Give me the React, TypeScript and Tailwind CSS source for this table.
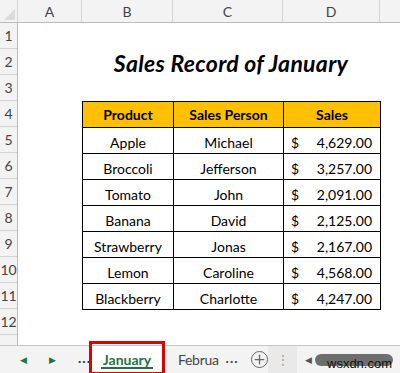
import { Plus } from 'lucide-react';

const rows = [
  ['Apple', 'Michael', '4,629.00'],
  ['Broccoli', 'Jefferson', '3,257.00'],
  ['Tomato', 'John', '2,091.00'],
  ['Banana', 'David', '2,125.00'],
  ['Strawberry', 'Jonas', '2,167.00'],
  ['Lemon', 'Caroline', '4,568.00'],
  ['Blackberry', 'Charlotte', '4,247.00'],
];

const font = { fontFamily: 'Lato, "Open Sans", sans-serif' };

const App = () => {
  return (
    <div className="relative w-[400px] h-[373px] overflow-hidden bg-white text-black" style={font}>
      {/* Column headers */}
      <div className="flex h-[23px] bg-[#f3f3f3] border-b border-[#bcbcbc] text-[14px] text-[#444]">
        <div className="relative w-[18px] border-r border-[#d5d5d5]">
          <div className="absolute right-[2px] bottom-[2px] w-0 h-0 border-l-[11px] border-l-transparent border-b-[11px] border-b-[#dcdcdc]" />
        </div>
        <div className="w-[64px] flex items-center justify-center border-r border-[#d5d5d5]">A</div>
        <div className="w-[91px] flex items-center justify-center border-r border-[#d5d5d5]">B</div>
        <div className="w-[110px] flex items-center justify-center border-r border-[#d5d5d5]">C</div>
        <div className="w-[97px] flex items-center justify-center border-r border-[#d5d5d5]">D</div>
        <div className="flex-1" />
      </div>

      <div className="flex h-[322px]">
        {/* Row numbers */}
        <div className="w-[18px] bg-[#f3f3f3] border-r border-[#bcbcbc] text-[14px] text-[#444]">
          {Array.from({ length: 12 }, (_, i) => (
            <div key={i} className="h-[26px] flex items-center justify-center border-b border-[#d5d5d5]">
              {i + 1}
            </div>
          ))}
        </div>

        {/* Sheet */}
        <div className="flex-1 pl-[64px]">
          <div className="w-[298px] h-[26px]" />
          <div className="w-[298px] h-[26px] flex items-center justify-center pt-[2px]">
            <span className="text-[23px] font-bold italic tracking-[0.3px]">Sales Record of January</span>
          </div>
          <div className="w-[298px] h-[26px]" />
          <table className="table-fixed border-collapse text-[14px]">
            <colgroup>
              <col className="w-[91px]" />
              <col className="w-[110px]" />
              <col className="w-[97px]" />
            </colgroup>
            <thead>
              <tr className="h-[26px] bg-[#ffc000] font-bold">
                <th className="border border-black p-0">Product</th>
                <th className="border border-black p-0">Sales Person</th>
                <th className="border border-black p-0">Sales</th>
              </tr>
            </thead>
            <tbody>
              {rows.map(([product, person, sales]) => (
                <tr key={product} className="h-[26px]">
                  <td className="border border-black p-0 text-center pt-[3px]">{product}</td>
                  <td className="border border-black p-0 text-center pt-[3px]">{person}</td>
                  <td className="border border-black p-0 pt-[3px]">
                    <div className="flex justify-between pl-[7px] pr-[8px]">
                      <span>$</span>
                      <span>{sales}</span>
                    </div>
                  </td>
                </tr>
              ))}
            </tbody>
          </table>
        </div>
      </div>

      {/* Sheet tabs */}
      <div className="flex items-center h-[28px] bg-[#f3f3f3] border-t border-[#c6c6c6] text-[14px]">
        <div className="w-[89px] flex items-center pl-[20px] gap-[22px] text-[#217346]">
          <span className="text-[9px]">◀</span>
          <span className="text-[9px]">▶</span>
          <span className="text-[#333] font-bold tracking-[1px] -mt-[4px]">...</span>
        </div>
        <div className="relative w-[76px] h-full bg-white flex items-center justify-center font-bold text-[#217346]">
          January
          <div className="absolute bottom-[4px] left-[12px] right-[12px] h-[2px] bg-[#217346]" />
        </div>
        <div className="w-[103px] flex items-center pl-[13px] text-[#444]">
          <span className="whitespace-nowrap tracking-[-0.3px]">Februa</span>
          <span className="ml-[7px] font-bold tracking-[1px] -mt-[4px]">...</span>
          <Plus className="ml-[12px] w-[17px] h-[17px] rounded-full border border-[#666] text-[#666]" strokeWidth={2} />
        </div>
        <div className="w-[29px] h-full bg-[#e9e9e9] flex items-center justify-center text-[#999] text-[12px]">⋮</div>
        <div className="flex-1 flex items-center pl-[8px] gap-[3px]">
          <span className="text-[9px] text-[#555]">◀</span>
          <div className="relative w-[78px] h-[12px] rounded-full bg-[#6e6e6e]">
            <span className="absolute left-[12px] top-[3px] text-[13px] leading-none text-[#111] whitespace-nowrap" style={{ fontFamily: '"Liberation Sans", sans-serif' }}>
              wsxdn.com
            </span>
          </div>
        </div>
      </div>

      {/* Red highlight box */}
      <div className="absolute left-[89px] top-[341px] w-[76px] h-[34px] border-[3px] border-[#e00000]" />
    </div>
  );
};

export default App;
